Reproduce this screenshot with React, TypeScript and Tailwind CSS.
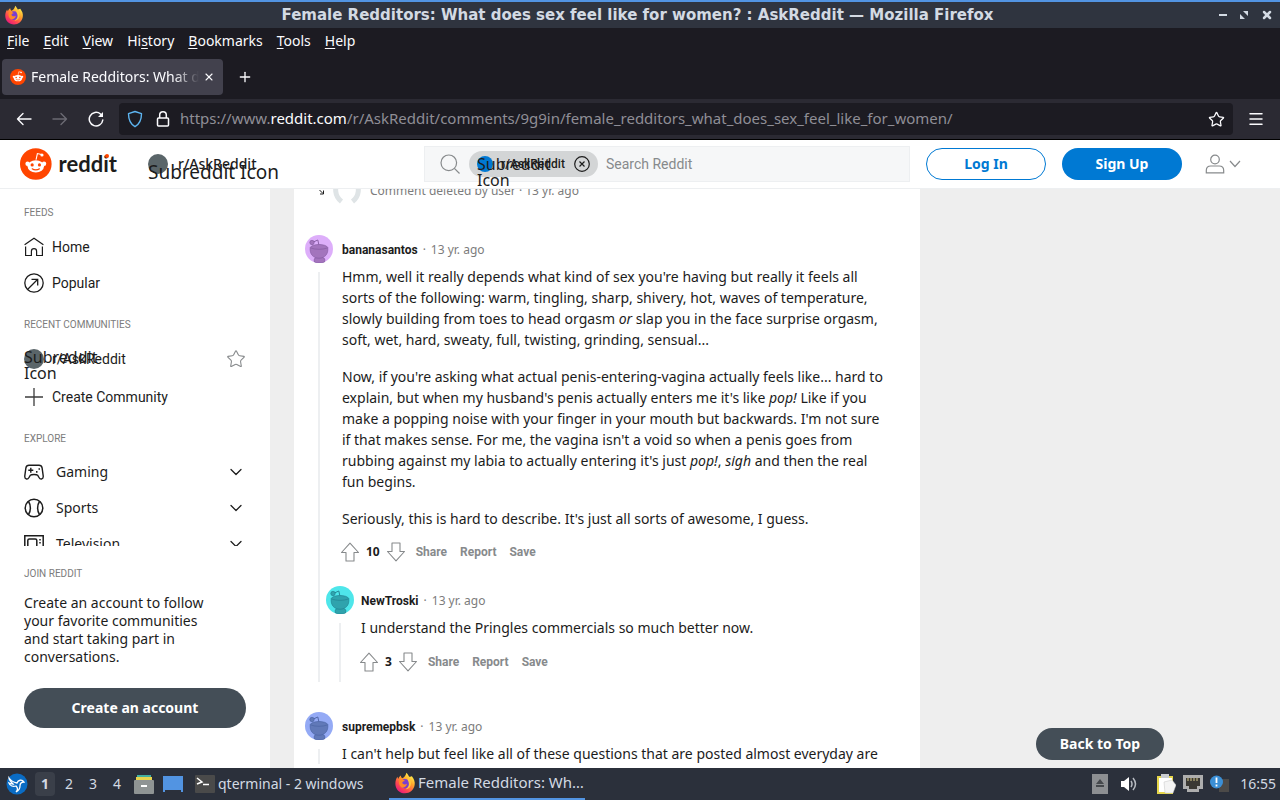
import type { ReactNode } from 'react';
import { ChevronDown, Menu, Plus, Star, X } from 'lucide-react';

const menuItems = [
  { key: 'F', before: '', after: 'ile' },
  { key: 'E', before: '', after: 'dit' },
  { key: 'V', before: '', after: 'iew' },
  { key: 's', before: 'Hi', after: 'tory' },
  { key: 'B', before: '', after: 'ookmarks' },
  { key: 'T', before: '', after: 'ools' },
  { key: 'H', before: '', after: 'elp' },
];

function FirefoxLogo({ className }: { className: string }) {
  return (
    <svg viewBox="0 0 32 32" className={className} aria-hidden="true">
      <defs>
        <linearGradient id="fox" x1="0.8" y1="0.1" x2="0.2" y2="0.95">
          <stop offset="0" stopColor="#fff04a" />
          <stop offset="0.35" stopColor="#ffa02b" />
          <stop offset="0.7" stopColor="#ff4a4f" />
          <stop offset="1" stopColor="#e8197c" />
        </linearGradient>
      </defs>
      <path
        d="M18 1c2 2 3 4 4 6 2 0 4-1 4-1 3 4 5 8 4 13-1 7-7 12-14 12C8 31 2 25 2 17c0-4 1-7 3-10l1 3c1-2 2-4 4-5 0 2 1 3 2 4 3-1 5-4 6-8z"
        fill="url(#fox)"
      />
      <circle cx="16" cy="17" r="7" fill="#7a3fd0" />
      <path d="M8 11c3-1 6 0 8 2-2 0-4 1-4 3 1 2 4 3 7 1-1 4-4 6-7 6-4-2-6-7-4-12z" fill="#ff8a26" />
      <path d="M20 7c4 3 6 8 4 13-1 3-4 5-7 5 5-3 6-8 3-13z" fill="#ffc83a" />
    </svg>
  );
}

function RedditLogo({ className }: { className: string }) {
  return (
    <svg viewBox="0 0 20 20" className={className} aria-hidden="true">
      <circle cx="10" cy="10" r="10" fill="#ff4500" />
      <path d="M10.2 7l.8-3.6 2.6.6" fill="none" stroke="#fff" strokeWidth="0.7" strokeLinecap="round" />
      <circle cx="13.9" cy="4.3" r="1" fill="#fff" />
      <circle cx="4.800" cy="9.800" r="1.400" fill="#fff" />
      <circle cx="15.200" cy="9.800" r="1.400" fill="#fff" />
      <ellipse cx="10" cy="11.500" rx="5.200" ry="3.900" fill="#fff" />
      <circle cx="7.700" cy="10.600" r="1" fill="#ff4500" />
      <circle cx="12.300" cy="10.600" r="1" fill="#ff4500" />
      <path d="M7.700 13c1.200 1 3.400 1 4.600 0" fill="none" stroke="#ff4500" strokeWidth="0.7" strokeLinecap="round" />
    </svg>
  );
}

function Avatar({ bg, fg, line }: { bg: string; fg: string; line: string }) {
  return (
    <svg viewBox="0 0 28 28" className="size-7 shrink-0" aria-hidden="true">
      <circle cx="14" cy="14" r="14" fill={bg} />
      <g fill={fg} stroke={line} strokeWidth="0.600">
        <path d="M9.500 27c-1-3 0-4 2-4.500h6c2 .5 3 1.500 2 4.500-3 1.300-7 1.300-10 0z" />
        <path d="M5.200 12.500C4.500 19 8 23.200 14 23.200s9.500-4.200 8.800-10.700c-2-4-15.600-4-17.600 0z" />
        <path d="M5.500 12.800c4 2 13 2 17 0" fill="none" />
        <path d="M13.800 9.500l-1-4.500-4.500 2" fill="none" strokeWidth="0.900" />
        <circle cx="7" cy="7.500" r="2.200" />
      </g>
    </svg>
  );
}

function VoteArrow({ down = false }: { down?: boolean }) {
  return (
    <svg viewBox="0 0 20 20" className={down ? 'size-5 rotate-180' : 'size-5'} fill="none" stroke="#878a8c" strokeWidth="1.100" strokeLinejoin="round" aria-hidden="true">
      <path d="M10 1.200L18.500 10.500H14V19H6V10.500H1.500z" />
    </svg>
  );
}

function CommentActions({ score }: { score: number }) {
  return (
    <div className="flex h-8 items-center font-[Roboto,sans-serif] text-xs font-bold text-[#878a8c]">
      <button type="button" aria-label="Upvote" className="-ml-[2px]">
        <VoteArrow />
      </button>
      <span className="px-[6px] pb-px font-['Noto_Sans',sans-serif] text-[#1c1c1c]">{score}</span>
      <button type="button" aria-label="Downvote" className="mr-[10px]">
        <VoteArrow down />
      </button>
      <div className="flex gap-[13px]">
        <button type="button">Share</button>
        <button type="button">Report</button>
        <button type="button">Save</button>
      </div>
    </div>
  );
}

type CommentProps = {
  author: string;
  avatar: { bg: string; fg: string; line: string };
  nested?: boolean;
  children: ReactNode;
};

function Comment({ author, avatar, nested = false, children }: CommentProps) {
  return (
    <article className={nested ? 'flex gap-[7px]' : 'flex gap-[9px]'}>
      <div className="flex w-7 shrink-0 flex-col items-center gap-[9px]">
        <Avatar {...avatar} />
        <div className="w-[2px] grow bg-[#edeff1]" />
      </div>
      <div className="min-w-0 grow">
        <header className="flex h-7 items-center gap-[5px] pt-[2px] text-xs text-[#7c7c7c]">
          <a href="#user" className="font-[Roboto,sans-serif] font-bold text-[#1c1c1c]">
            {author}
          </a>
          <span>·</span>
          <span>13 yr. ago</span>
        </header>
        {children}
      </div>
    </article>
  );
}

function SectionLabel({ children }: { children: ReactNode }) {
  return <h2 className="font-[Roboto,sans-serif] text-[10px] leading-4 text-[#7c7c7c]">{children}</h2>;
}

const exploreTopics = [
  {
    name: 'Gaming',
    icon: (
      <svg viewBox="0 0 20 20" className="size-5" fill="none" stroke="currentColor" strokeWidth="1.400" strokeLinejoin="round">
        <path d="M5 3.200h10c2 0 2.800 1 3.100 2.600l1.100 8c.4 3.500-2.700 4.300-4.200 1.700l-1.400-2.300c-.9-1-6.300-1-7.200 0L5 15.500C3.500 18.100.4 17.300.8 13.800l1.100-8C2.200 4.200 3 3.200 5 3.200z" />
        <path d="M6.800 5.800v5M4.300 8.300h5" />
        <path d="M12 9.800h1.500M14.500 7h1.500" strokeWidth="1.700" />
      </svg>
    ),
  },
  {
    name: 'Sports',
    icon: (
      <svg viewBox="0 0 20 20" className="size-5" fill="none" stroke="currentColor" strokeWidth="1.500">
        <circle cx="10" cy="10" r="8.800" />
        <path d="M4.500 3.500c2.500 3.500 2.500 9.500 0 13M15.500 3.500c-2.500 3.500-2.500 9.500 0 13" />
      </svg>
    ),
  },
  {
    name: 'Television',
    icon: (
      <svg viewBox="0 0 20 20" className="size-5" fill="none" stroke="currentColor" strokeWidth="1.500">
        <path d="M.8 1.800h18.400v14H.8zM3.800 13V6.500q0-1.500 1.500-1.500h6q1.500 0 1.500 1.500V13zM5 18.500h10" />
        <path d="M16 5v1.500M16 8v1.500" />
      </svg>
    ),
  },
];

function BrowserChrome() {
  return (
    <header className="shrink-0 bg-[#1c1b22] text-[#fbfbfe]">
      <div className="flex h-7 items-center border-t-2 border-[#5294e2] bg-[#2f343f] px-1 text-[#d3dae3]">
        <FirefoxLogo className="size-5" />
        <h1 className="ml-8 grow truncate text-center font-['DejaVu_Sans',sans-serif] text-[15px] leading-5 font-bold">
          Female Redditors: What does sex feel like for women? : AskReddit — Mozilla Firefox
        </h1>
        <div className="flex items-center gap-3">
          <button type="button" aria-label="Minimize" className="h-[2px] w-2 bg-current" />
          <button type="button" aria-label="Restore">
            <svg viewBox="0 0 10 10" className="size-[10px]" fill="currentColor">
              <path d="M4 1h5v5zM1 4v5h5z" />
            </svg>
          </button>
          <button type="button" aria-label="Close window" className="mr-[3px]">
            <X className="size-3" strokeWidth={5} />
          </button>
        </div>
      </div>
      <nav className="flex h-7 items-center gap-[14px] px-[7px] pb-[2px] text-sm">
        {menuItems.map((item) => (
          <button key={item.key + item.after} type="button">
            {item.before}
            <u className="underline-offset-2">{item.key}</u>
            {item.after}
          </button>
        ))}
      </nav>
      <div className="flex h-[43px] items-center gap-[14px] px-[2px] pb-[2px]">
        <div className="flex h-9 w-[221px] items-center gap-1 rounded bg-[#42414d] px-2 text-sm">
          <RedditLogo className="mr-px size-4 shrink-0" />
          <span className="w-[168px] overflow-hidden mask-r-from-85% mask-r-to-100% whitespace-nowrap">
            Female Redditors: What does sex
          </span>
          <button type="button" aria-label="Close tab">
            <X className="size-3" strokeWidth={2.2} />
          </button>
        </div>
        <button type="button" aria-label="New tab">
          <Plus className="size-4" strokeWidth={2} />
        </button>
      </div>
      <div className="flex h-[41px] items-center border-b border-black bg-[#2b2a33] px-4">
        <button type="button" aria-label="Back">
          <svg viewBox="0 0 16 16" className="size-4" fill="none" stroke="currentColor" strokeWidth="1.400" strokeLinecap="round" strokeLinejoin="round">
            <path d="M15 8H1.500M7 2.500L1.500 8 7 13.500" />
          </svg>
        </button>
        <button type="button" aria-label="Forward" className="ml-5 text-[#6b6a73]">
          <svg viewBox="0 0 16 16" className="size-4" fill="none" stroke="currentColor" strokeWidth="1.400" strokeLinecap="round" strokeLinejoin="round">
            <path d="M1 8h13.500M9 2.500L14.500 8 9 13.500" />
          </svg>
        </button>
        <button type="button" aria-label="Reload" className="ml-5">
          <svg viewBox="0 0 16 16" className="size-4" fill="none" stroke="currentColor" strokeWidth="1.500" strokeLinecap="round">
            <path d="M14.800 9A6.800 6.800 0 1 1 12.500 3L14 4.500" />
            <path d="M15 1v5h-5z" fill="currentColor" stroke="none" />
          </svg>
        </button>
        <div className="ml-[15px] flex h-8 min-w-0 grow items-center rounded bg-[#1c1b22] px-2">
          <svg viewBox="0 0 16 18" className="h-[18px] w-4 shrink-0" fill="none" stroke="#5db4f0" strokeWidth="1.400" strokeLinejoin="round">
            <path d="M8 1.500l6.500 2.200c0 6-1.500 10-6.500 13C3 13.700 1.500 9.700 1.500 3.700z" />
          </svg>
          <svg viewBox="0 0 14 18" className="ml-[13px] h-[18px] w-[14px] shrink-0" fill="none" stroke="currentColor" strokeWidth="1.500">
            <rect x="1.500" y="8" width="11" height="8" rx="1" />
            <path d="M3.700 8V5a3.300 3.300 0 0 1 6.600 0v3" />
          </svg>
          <div
            role="textbox"
            aria-label="Address"
            tabIndex={0}
            className="ml-[10px] grow truncate pb-[2px] text-[15px] leading-5 text-[#8f8e96]"
          >
            https://www.<span className="text-[#fbfbfe]">reddit.com</span>
            /r/AskReddit/comments/9g9in/female_redditors_what_does_sex_feel_like_for_women/
          </div>
          <button type="button" aria-label="Bookmark this page">
            <Star className="size-[17px]" strokeWidth={1.8} />
          </button>
        </div>
        <button type="button" aria-label="Open application menu" className="-mr-px ml-[14px]">
          <Menu className="size-[18px]" strokeWidth={2} />
        </button>
      </div>
    </header>
  );
}

function SiteHeader() {
  return (
    <header className="relative z-10 flex h-[49px] shrink-0 items-center border-b border-[#edeff1] bg-white px-5">
      <a href="#home" className="flex w-[97px] items-center gap-[7px]">
        <RedditLogo className="size-8" />
        <span className="relative font-[Lato,sans-serif] text-[22px] leading-8 font-bold">
          reddit
          <span className="absolute top-[6px] right-[8px] size-1 rounded-full bg-[#ff4500]" />
        </span>
      </a>
      <button type="button" className="relative ml-[31px] flex w-[248px] items-center gap-[10px] text-sm font-medium">
        <span className="size-5 rounded-full bg-[#5a6569]" />
        <span>r/AskReddit</span>
        <span className="absolute top-0 left-0 text-[19px] leading-9 font-normal whitespace-nowrap">Subreddit Icon</span>
      </button>
      <label className="ml-7 flex h-9 min-w-0 grow items-center border border-[#edeff1] bg-[#f6f7f8] pl-[15px] font-[Roboto,sans-serif]">
        <svg viewBox="0 0 20 20" className="size-5 shrink-0" fill="none" stroke="#878a8c" strokeWidth="1.200" aria-hidden="true">
          <circle cx="8.800" cy="8.800" r="7.800" />
          <path d="M14.400 14.400L19.500 19.500" />
        </svg>
        <span className="relative ml-[9px] flex h-[26px] w-[129px] shrink-0 items-center rounded-full bg-[#d3d5d6] pl-2 text-[#1c1c1c]">
          <span className="size-4 rounded-full bg-[#0079d3]" />
          <span className="ml-2 text-xs font-medium">r/AskReddit</span>
          <span className="absolute top-[5px] left-2 w-20 font-['Noto_Sans',sans-serif] text-base leading-4">
            Subreddit Icon
          </span>
          <button type="button" aria-label="Clear community filter" className="mr-2 ml-auto">
            <svg viewBox="0 0 16 16" className="size-4" fill="none" stroke="currentColor" strokeWidth="1.200">
              <circle cx="8" cy="8" r="7.300" />
              <path d="M5.500 5.500l5 5M10.500 5.500l-5 5" />
            </svg>
          </button>
        </span>
        <input
          type="search"
          placeholder="Search Reddit"
          className="ml-2 min-w-0 grow bg-transparent text-sm outline-none placeholder:text-[#878a8c]"
        />
      </label>
      <div className="ml-4 flex gap-4 text-sm font-bold">
        <button type="button" className="h-8 w-[120px] rounded-full border border-[#0079d3] pb-px text-[#0079d3]">
          Log In
        </button>
        <button type="button" className="h-8 w-[120px] rounded-full bg-[#0079d3] pb-px text-white">
          Sign Up
        </button>
      </div>
      <button type="button" aria-label="User menu" className="mr-[19px] ml-[23px] flex items-center gap-1 text-[#878a8c]">
        <svg viewBox="0 0 20 20" className="size-5" fill="none" stroke="currentColor" strokeWidth="1.200">
          <circle cx="10" cy="5.500" r="4.300" />
          <path d="M1.300 18.800v-2.300c0-2.800 2-4.500 4.500-4.500h8.400c2.500 0 4.500 1.700 4.500 4.500v2.300z" />
        </svg>
        <svg viewBox="0 0 12 12" className="size-3" fill="none" stroke="currentColor" strokeWidth="1.200">
          <path d="M1 3l5 5.500L11 3" />
        </svg>
      </button>
    </header>
  );
}

function Sidebar() {
  return (
    <aside className="flex w-[270px] shrink-0 flex-col bg-white px-6">
      <nav className="min-h-0 grow basis-0 overflow-hidden pt-4 text-sm">
        <SectionLabel>FEEDS</SectionLabel>
        <div className="mt-2 mb-4 font-[Roboto,sans-serif]">
          <a href="#home" className="flex h-9 items-center gap-2">
            <svg viewBox="0 0 20 20" className="size-5" fill="none" stroke="currentColor" strokeWidth="1.200">
              <path d="M.6 7.800L10 1.200l9.400 6.600M1.600 9.500v9h5.800v-4.200c0-3.600 5.200-3.600 5.200 0v4.200h5.800v-9" />
            </svg>
            Home
          </a>
          <a href="#popular" className="flex h-9 items-center gap-2">
            <svg viewBox="0 0 20 20" className="size-5" fill="none" stroke="currentColor" strokeWidth="1.300">
              <circle cx="10" cy="10" r="9.200" />
              <path d="M3.500 16.500L13.500 6.500M7.500 6.300h6.200v6.200" />
            </svg>
            Popular
          </a>
        </div>
        <SectionLabel>RECENT COMMUNITIES</SectionLabel>
        <div className="mt-2 mb-4 flex flex-col gap-[2px] font-[Roboto,sans-serif]">
          <div className="flex h-9 items-center justify-between">
            <a href="#askreddit" className="relative flex items-center gap-2">
              <span className="size-5 rounded-full bg-[#5a6569]" />
              r/AskReddit
              <span className="absolute top-0 left-0 w-20 font-['Noto_Sans',sans-serif] text-base leading-4">
                Subreddit Icon
              </span>
            </a>
            <button type="button" aria-label="Favorite r/AskReddit" className="text-[#878a8c]">
              <Star className="size-5" strokeWidth={1.3} />
            </button>
          </div>
          <button type="button" className="flex h-9 items-center gap-2">
            <svg viewBox="0 0 20 20" className="size-5" stroke="#3c3c3c" strokeWidth="1.300">
              <path d="M10 1v18M1 10h18" />
            </svg>
            Create Community
          </button>
        </div>
        <SectionLabel>EXPLORE</SectionLabel>
        <div className="mt-[7px]">
          {exploreTopics.map((topic) => (
            <button key={topic.name} type="button" className="flex h-9 w-full items-center gap-3">
              {topic.icon}
              {topic.name}
              <ChevronDown className="ml-auto size-5" strokeWidth={1.5} />
            </button>
          ))}
        </div>
      </nav>
      <section className="pt-5 pb-10">
        <SectionLabel>JOIN REDDIT</SectionLabel>
        <p className="mt-3 pr-8 text-sm leading-[18px]">
          Create an account to follow your favorite communities and start taking part in conversations.
        </p>
        <button type="button" className="mt-[22px] h-10 w-full rounded-full bg-[#444e57] text-sm font-bold text-white">
          Create an account
        </button>
      </section>
    </aside>
  );
}

function Thread() {
  return (
    <main className="min-w-0 grow overflow-hidden bg-white pr-8 pl-[11px]">
      <div className="-mt-3 flex h-7 items-center text-xs text-[#7c7c7c]">
        <svg viewBox="0 0 8 8" className="ml-[13px] size-2" fill="none" stroke="#1c1c1c">
          <path d="M1.500 3L5 6.500M5.500 3.500V7H2" />
        </svg>
        <svg viewBox="0 0 28 28" className="mr-[9px] ml-[7px] size-7" fill="none" stroke="#dfe4e6" strokeWidth="5">
          <path d="M6 4C1 10 1.500 19 8.500 24.500M22 4c5 6 4.500 15-2.500 20.500" />
        </svg>
        Comment deleted by user · 13 yr. ago
      </div>
      <div className="mt-[30px] flex flex-col gap-[30px] text-sm leading-[21px]">
        <Comment author="bananasantos" avatar={{ bg: '#ddaefa', fg: '#a374bd', line: '#80559c' }}>
          <div className="mt-[3px] space-y-4">
            <p>
              Hmm, well it really depends what kind of sex you're having but really it feels all sorts of the following:
              warm, tingling, sharp, shivery, hot, waves of temperature, slowly building from toes to head orgasm{' '}
              <em>or</em> slap you in the face surprise orgasm, soft, wet, hard, sweaty, full, twisting, grinding,
              sensual...
            </p>
            <p>
              Now, if you're asking what actual penis-entering-vagina actually feels like... hard to explain, but when my
              husband's penis actually enters me it's like <em>pop!</em> Like if you make a popping noise with your
              finger in your mouth but backwards. I'm not sure if that makes sense. For me, the vagina isn't a void so
              when a penis goes from rubbing against my labia to actually entering it's just <em>pop!</em>,{' '}
              <em>sigh</em> and then the real fun begins.
            </p>
            <p>Seriously, this is hard to describe. It's just all sorts of awesome, I guess.</p>
          </div>
          <div className="mt-[7px]">
            <CommentActions score={10} />
          </div>
          <div className="mt-[18px] -ml-4">
            <Comment author="NewTroski" nested avatar={{ bg: '#4ee6ea', fg: '#2fa3ad', line: '#1f7c8c' }}>
              <p className="mt-[3px]">I understand the Pringles commercials so much better now.</p>
              <div className="mt-2 pb-1">
                <CommentActions score={3} />
              </div>
            </Comment>
          </div>
        </Comment>
        <Comment author="supremepbsk" avatar={{ bg: '#94aaf5', fg: '#6179b8', line: '#475f9f' }}>
          <p className="mt-[3px]">
            I can't help but feel like all of these questions that are posted almost everyday are
          </p>
        </Comment>
      </div>
    </main>
  );
}

function Taskbar() {
  return (
    <footer className="flex h-8 shrink-0 items-center bg-[#2b303b] pr-1 pl-[6px] font-['Noto_Sans',sans-serif] text-sm text-[#d3dae3]">
      <button type="button" aria-label="Application menu">
        <svg viewBox="0 0 22 22" className="size-[22px]">
          <circle cx="11" cy="11" r="10.500" fill="#0a6cc4" />
          <path
            d="M3 5c2 3 4 4 8 5 1-3 5-4 7-1-3 0-4 1-4 4 0 4-2 5-4 6 2-2 2-4 0-6-3 1-6 0-7-3 2 1 3 1 4 1C5 9 3 7 3 5z"
            fill="none"
            stroke="#fff"
            strokeWidth="1.300"
          />
        </svg>
      </button>
      <nav className="ml-[7px] flex items-center">
        {[1, 2, 3, 4].map((n) => (
          <button
            key={n}
            type="button"
            className={n === 1 ? 'h-6 w-5 rounded-sm bg-[#3a3f49] font-bold' : 'ml-1 h-6 w-5'}
          >
            {n}
          </button>
        ))}
      </nav>
      <button type="button" aria-label="File manager" className="ml-[7px]">
        <svg viewBox="0 0 20 20" className="size-5">
          <path d="M3 1h14v3H3z" fill="#43b0a0" />
          <path d="M2 3h16v4H2z" fill="#e8d44d" />
          <rect y="6" width="20" height="14" rx="1" fill="#8f9494" />
          <rect x="7" y="11" width="6" height="2" fill="#fff" />
        </svg>
      </button>
      <button type="button" aria-label="Show desktop" className="ml-[9px]">
        <svg viewBox="0 0 20 16" className="h-4 w-5">
          <rect width="20" height="14" fill="#5294e2" />
          <path d="M0 13h2v3H0zM18 13h2v3h-2z" fill="#5294e2" />
        </svg>
      </button>
      <button type="button" className="ml-3 flex items-center gap-[3px]">
        <svg viewBox="0 0 20 18" className="h-[18px] w-5">
          <rect width="20" height="18" rx="1" fill="#4a4a4a" />
          <path d="M2 3l5 4-5 2M8 9.500h6" fill="none" stroke="#fff" strokeWidth="1.500" />
        </svg>
        <span className="w-[149px] text-left whitespace-nowrap">qterminal - 2 windows</span>
      </button>
      <button type="button" className="ml-[22px] flex h-full w-[196px] items-center border-b-2 border-[#5294e2] pl-[5px]">
        <FirefoxLogo className="mr-[2px] size-[22px] shrink-0" />
        <span className="truncate text-[15px]">Female Redditors: Wh…</span>
      </button>
      <div className="ml-auto flex items-center">
        <svg viewBox="0 0 16 20" className="h-5 w-4">
          <rect width="16" height="20" fill="#8d8f92" />
          <path d="M8 5l4 5H4zM4 11h8v2H4z" fill="#45484c" />
        </svg>
        <svg viewBox="0 0 18 16" className="ml-3 h-4 w-[18px]">
          <path d="M1 5h3l5-4v14l-5-4H1z" fill="#fff" />
          <path d="M11 5q2 3 0 6M13 2q5 6 0 12" fill="none" stroke="#b8bcc2" strokeWidth="1.500" />
        </svg>
        <svg viewBox="0 0 20 20" className="ml-[18px] size-5">
          <rect x="1" y="2" width="16" height="18" fill="#e6d64a" />
          <rect x="3" y="4" width="13" height="14" fill="#fff" />
          <rect x="5" width="8" height="4" fill="#c9ccd0" />
          <path d="M8 8l8-2 4 5-3 8H9z" fill="#f4f4f4" stroke="#c4c4c4" strokeWidth="0.500" />
        </svg>
        <svg viewBox="0 0 20 18" className="ml-[7px] h-[18px] w-5">
          <path d="M0 0h20v14h-4v3H4v-3H0z" fill="#aeaeae" />
          <path d="M3 3h14v8h-3v3H6v-3H3z" fill="#3a3833" />
          <path d="M5 3v3M8 3v3M11 3v3M14 3v3" stroke="#d5c88b" />
        </svg>
        <svg viewBox="0 0 20 18" className="ml-[7px] h-[18px] w-5">
          <rect x="9" y="4" width="10" height="13" fill="#4c4a48" />
          <circle cx="6.500" cy="7" r="6.500" fill="#3b8fd6" />
          <path d="M6.500 2.500v5.500M6.500 9.500v2" stroke="#fff" strokeWidth="1.800" />
        </svg>
        <time className="ml-[10px]">16:55</time>
      </div>
    </footer>
  );
}

export default function App() {
  return (
    <div className="flex h-screen flex-col overflow-hidden font-['Noto_Sans',sans-serif] text-[#1c1c1c]">
      <BrowserChrome />
      <SiteHeader />
      <div className="flex min-h-0 grow bg-[#eeeeee]">
        <Sidebar />
        <div className="w-6 shrink-0" />
        <Thread />
        <div className="flex w-[360px] shrink-0 items-end justify-center pb-2">
          <button type="button" className="h-8 w-32 rounded-full bg-[#444e57] text-sm font-bold text-white">
            Back to Top
          </button>
        </div>
      </div>
      <Taskbar />
    </div>
  );
}
